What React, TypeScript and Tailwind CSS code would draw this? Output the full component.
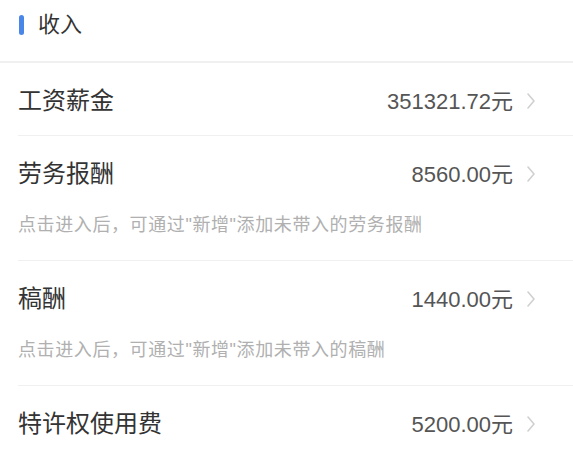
const items = [
  { name: '工资薪金', amount: '351321.72' },
  { name: '劳务报酬', amount: '8560.00', hint: '点击进入后，可通过"新增"添加未带入的劳务报酬' },
  { name: '稿酬', amount: '1440.00', hint: '点击进入后，可通过"新增"添加未带入的稿酬' },
  { name: '特许权使用费', amount: '5200.00' },
]

function Chevron() {
  return (
    <svg width="10" height="20" viewBox="0 0 10 20" fill="none" className="ml-[13px] shrink-0">
      <path d="M2 3 L8 10 L2 17" stroke="#d0d0d0" strokeWidth="1.6" strokeLinecap="round" strokeLinejoin="round" />
    </svg>
  )
}

export default function App() {
  return (
    <div
      className="w-[573px] h-[453px] overflow-hidden bg-white"
      style={{ fontFamily: '"Liberation Sans", "Noto Sans CJK SC", sans-serif' }}
    >
      <div className="h-[63px] flex items-start pt-[15px] pl-[19px] border-b-2 border-[#f0f0f0]">
        <span className="w-[5px] h-[20px] rounded-full bg-[#4a86e8]" />
        <span className="ml-[14px] text-[22px] leading-[20px] text-[#333]">收入</span>
      </div>

      <div className="pl-[18px]">
        {items.map((item, i) => (
          <div key={item.name} className={i < items.length - 1 ? 'border-b border-[#f0f0f0]' : ''}>
            <div className="h-[72px] flex items-center pt-[4px] pr-[37px]">
              <span className="text-[24px] text-[#333]">{item.name}</span>
              <span className="ml-auto text-[22px] text-[#555]">{item.amount}元</span>
              <Chevron />
            </div>
            {item.hint && (
              <div className="mt-[5px] pb-[23px] text-[18px] leading-6 tracking-[0.6px] text-[#b0b0b0]">
                {item.hint}
              </div>
            )}
          </div>
        ))}
      </div>
    </div>
  )
}
